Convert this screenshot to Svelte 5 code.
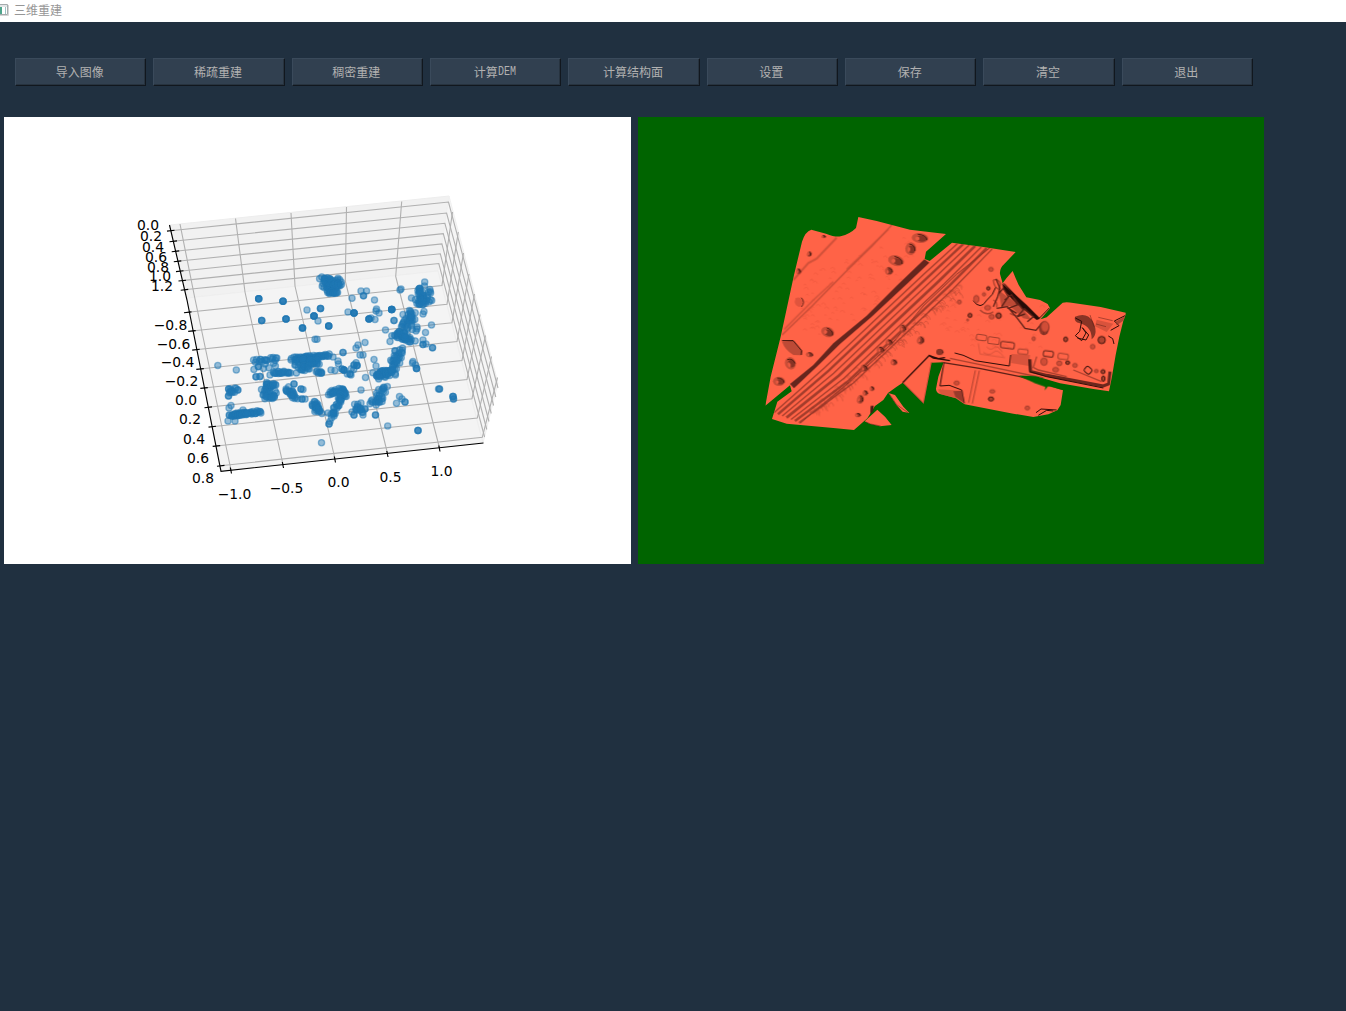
<script>
  const actions = ['导入图像', '稀疏重建', '稠密重建', '计算DEM', '计算结构面', '设置', '保存', '清空', '退出'];
  const split = (t) => t.match(/[A-Z]+|[^A-Z]+/g);

  // grid lines: x lines run down the back wall and then over the floor
  const xLines = [
    '180,224 194.5,296.5 231,470', '235.5,218.5 245,292 283,464.5', '291,213 295,286 335,459',
    '346.5,207 345.3,281 387.5,453.5', '401.7,201.5 395.7,276.5 439.5,448'
  ];
  const zLeft = [[170.5, 230.7], [173, 241.3], [175.2, 251.3], [177.3, 261.3], [179.5, 271.2], [182, 280.6], [184.2, 289.8]];
  const zRight = [[448.5, 202], [446.6, 213], [444.9, 223.3], [443.3, 233.7], [441.9, 243.9], [440.3, 253.8], [438.8, 263.5]];
  const zEnd = [[498, 388], [495.8, 397], [493.6, 405.5], [491.3, 413.5], [489, 421.5], [486.8, 429.5], [484.6, 437]];
  const yLeft = [[187.5, 312.3], [191.7, 331], [195.7, 349.7], [199.8, 369], [203.8, 388], [208, 407.3], [212, 426.7], [216.2, 446], [220.5, 465.8]];
  const yRight = [[442, 285.5], [447, 304.3], [452, 322.7], [457, 341.5], [462, 360.5], [467, 379.5], [472, 398.7], [477.3, 418], [482.3, 437.3]];
  const yTop = [[452.5, 212], [458.3, 232], [463.5, 253], [469, 274], [474.5, 294], [480, 314.5], [485.5, 335.5], [491.5, 356.5], [497.5, 377.5]];
  const xTicks = [[231, 470], [283, 464.5], [335, 459], [387.5, 453.5], [439.5, 448]];

  const labels = [
    ['0.0', 148, 225.5], ['0.2', 151, 236.5], ['0.4', 153, 247.5], ['0.6', 156, 257.5], ['0.8', 158, 267.5],
    ['1.0', 160, 276.5], ['1.2', 162, 286.5],
    ['−0.8', 170.5, 325.5], ['−0.6', 173.5, 344.5], ['−0.4', 177.5, 362.5], ['−0.2', 181.5, 381.5], ['0.0', 186, 400.5],
    ['0.2', 190, 419.5], ['0.4', 194, 439.5], ['0.6', 198, 458.5], ['0.8', 203, 478.5],
    ['−1.0', 234.5, 494.5], ['−0.5', 286.5, 488.5], ['0.0', 338.5, 482.5], ['0.5', 390.5, 477.5], ['1.0', 441.5, 471.5]
  ];

  // scattered points: x, y, number of stacked markers
  const points = [
    258.7, 298.7, 4, 283, 301.3, 4, 261.7, 320.5, 3, 286, 319, 4, 302.5, 328, 4, 314, 316, 5, 320.5, 308.5, 3, 328.7, 326, 4,
    354, 313, 5, 391.7, 309.5, 6, 418, 430.5, 3, 439.5, 389, 2, 438.5, 389, 1, 453.5, 399, 2, 453, 396.5, 3,
    307, 310, 1, 318, 321, 1, 315, 339.3, 1, 317, 339.3, 1, 352, 298.3, 1, 348, 312, 1, 361, 291, 1, 366.5, 291, 1, 363.5, 295.8, 2,
    374.5, 300, 1, 400, 290, 1, 401, 289, 1, 424.7, 282, 1, 424.5, 286, 1, 385.5, 330, 1, 390, 341.5, 1, 403, 314.5, 1,
    394, 320.5, 2, 431.5, 325, 1, 425.5, 332.5, 1, 432.5, 347.8, 2, 423, 340, 1, 423, 344.5, 2, 426, 344, 1, 365, 342.5, 1, 358, 345, 1,
    356, 348, 1, 343, 352.5, 2, 360, 355, 1, 363, 355, 1, 333, 357, 1, 374, 359.5, 1, 376, 366, 1, 365.5, 377.5, 1, 361, 390, 1,
    413, 361.5, 1, 412.5, 363, 1, 416.5, 368.5, 3, 415.5, 365, 1, 217.8, 365.5, 1, 236.3, 370, 1, 321.5, 442.7, 1,
    387.7, 426, 1, 396.5, 403.3, 1, 405, 402, 2, 402, 399, 1, 399.5, 396.5, 1, 376, 311, 1, 376.5, 309, 1, 379, 313, 1, 375, 319.5, 1,
    369, 319, 4, 371, 318, 1, 338.5, 364, 1, 350, 374, 2, 351, 375, 1, 357, 365.5, 3, 354, 365, 2, 338, 361, 1,
    335, 370.5, 1, 331, 370, 1, 344, 370, 4, 342, 369, 2, 228, 421, 1, 235, 421, 1, 229, 408, 1, 231, 405.5, 1, 243, 410, 1,
    329, 424, 2, 330, 421.5, 1, 354, 415, 2, 352, 412, 1, 363, 415, 1, 375.5, 415, 2, 361, 403, 1, 365, 409, 2, 328, 413, 1,
    256, 376.8, 2, 260, 376.5, 2, 270, 375, 1, 228.5, 396, 2, 294, 384, 2, 301, 389, 2, 303, 389.5, 1,
    302, 399, 2, 305, 399, 1, 423, 314, 1, 424, 311.5, 1, 417, 329, 1, 416, 331, 1, 417, 327, 1, 411.5, 298, 1
  ];
  // dense groups: x0, y0, x1, y1, spread, count
  const groups = [
    [322, 279, 339, 281, 3, 24], [323, 285, 339, 286, 4, 34], [328, 292, 337, 293, 2.5, 18],
    [254, 361, 277, 358.5, 2, 17], [254, 367, 275, 365, 3, 8], [273, 373, 290, 372, 1.6, 20],
    [292, 359, 329, 355, 1.8, 46], [297, 363, 319, 361, 4, 34], [298, 371, 310, 366, 4, 18], [317, 372, 322, 373, 1.5, 8],
    [264, 386, 275, 385, 4, 22], [264, 392, 274, 394, 5, 20], [264, 398, 275, 398, 2, 8],
    [286, 389, 295, 398, 3.3, 22], [228, 389, 236, 391, 4, 14], [230, 415, 261, 412, 2, 40], [232, 416, 247, 413.5, 1.5, 16],
    [314, 404, 319, 411, 4, 28], [330, 393, 336, 391, 2.5, 14], [341, 388, 344, 395, 3.5, 18], [342, 395, 333, 417, 3.2, 28],
    [356, 406, 363, 411, 4, 14], [372, 403, 382, 400, 3.5, 16], [379, 398, 385, 386, 4.5, 15],
    [377, 377, 391, 371, 4, 32], [382, 373, 390, 371, 3, 16], [392, 374, 397, 354, 4.5, 24], [394, 364, 401, 349, 5, 16],
    [394, 336, 413, 341, 3.5, 20], [398, 333, 408, 336, 4, 22], [403, 328, 412, 311, 3.5, 22], [409, 328, 414, 314, 3.5, 12],
    [418, 289, 424, 298, 4, 19], [417, 302, 427, 303, 5, 20], [427, 290, 430, 302, 4, 9], [356, 365, 348, 373, 3, 4], [374, 374, 377, 377, 3, 3]
  ];
  let seed = 11;
  const rand = () => ((seed = (seed * 16807) % 2147483647) / 2147483647);
  const dots = [];
  for (let i = 0; i < points.length; i += 3)
    for (let k = 0; k < points[i + 2]; k++) dots.push([points[i], points[i + 1]]);
  for (const [x0, y0, x1, y1, s, n] of groups)
    for (let k = 0; k < n; k++) {
      const t = n > 1 ? k / (n - 1) : 0;
      dots.push([+(x0 + (x1 - x0) * t + (rand() - 0.5) * s * 1.6).toFixed(1), +(y0 + (y1 - y0) * t + (rand() - 0.5) * s * 1.6).toFixed(1)]);
    }

  // faint rough marks along the gravel edge: x, y, size
  const rubble = [];
  for (let i = 0; i < 120; i++) {
    const t = rand();
    rubble.push([190 + 430 * t + (rand() - 0.5) * 26, 640 - 372 * t + (rand() - 0.5) * 30, 5 + rand() * 10]);
  }
  // barely visible surface texture
  const stains = [];
  for (let i = 0; i < 110; i++) {
    const t = rand();
    stains.push([150 + t * 330, 330 - t * 130 + (rand() - 0.5) * 200, 3 + rand() * 7]);
  }
  for (let i = 0; i < 60; i++) stains.push([570 + rand() * 300, 300 + rand() * 150, 4 + rand() * 8]);
  // craters: x, y, rx, ry, rotation
  const pits = [
    [178, 162, 7, 9, 20], [146, 214, 7, 10, 0], [221, 110, 7, 5, 0], [510, 114, 25, 15, 5], [482, 146, 16, 19, 5], [438, 182, 24, 16, 15],
    [417, 213, 12, 13, 0], [233, 396, 20, 15, 20], [179, 464, 11, 8, 5], [121, 490, 16, 19, -20], [87, 544, 18, 14, 0],
    [432, 487, 10, 10, 0], [512, 421, 11, 13, 20], [343, 505, 11, 12, 0], [331, 598, 10, 14, 15], [346, 579, 8, 9, 0], [366, 566, 7, 8, 0],
    [324, 645, 9, 7, 0], [570, 456, 11, 10, 0], [459, 386, 10, 13, 0], [418, 427, 11, 10, 0], [392, 450, 12, 11, 0]
  ];
  const rings = [
    [88, 306, 6, 6], [120, 346, 6, 6], [113, 360, 3, 3], [162, 283, 5, 5], [175, 265, 5, 5], [173, 323, 9, 7], [139, 297, 8, 11],
    [206, 347, 8, 8], [185, 350, 8, 7], [183, 208, 7, 6], [407, 418, 6, 7], [311, 416, 5, 6], [488, 440, 7, 7], [515, 420, 11, 11],
    [342, 485, 10, 11], [388, 490, 8, 7], [413, 488, 6, 5], [435, 496, 7, 6], [499, 513, 6, 5], [519, 515, 6, 6], [80, 549, 8, 6],
    [187, 574, 8, 5], [183, 597, 8, 6], [292, 624, 7, 6], [345, 380, 12, 16], [520, 536, 5, 8], [377, 509, 9, 7]
  ];
  // rail lines: offset, width
  const tracks = [[0, 4], [14, 7], [29, 4], [44, 8], [60, 4], [74, 7], [88, 4]];
</script>

<div class="window">
  <header class="titlebar">
    <svg class="app-icon" width="9" height="14" viewBox="0 0 9 14">
      <path d="M-4 1.5H7.5V11.5H-4" fill="#fff" stroke="#a5abad" />
      <path d="M-4 3H7" stroke="#c5cacc" />
      <path d="M0 4h2v7H0z" fill="#4ea58c" />
      <path d="M5.5 4v7" stroke="#9cc5c4" />
      <path d="M-4 12.5H8.5V2" fill="none" stroke="#d5d5d5" />
    </svg>
    <span>三维重建</span>
  </header>

  <nav class="toolbar">
    {#each actions as label}
      <button type="button"><span class="caption">{#each split(label) as part}<span class:latin={/[A-Z]/.test(part)}>{part}</span>{/each}</span></button>
    {/each}
  </nav>

  <main class="views">
    <section class="view plot">
      <svg width="627" height="447" viewBox="4 117 627 447">
        <polygon class="wall" points="170,225 449,196 438,271 187,298" />
        <polygon class="side" points="449,196 498,383 483,443 438,271" />
        <polygon class="floor" points="187,298 438,271 483,443 221,471" />
        <g class="grid">
          {#each xLines as line}<polyline points={line} />{/each}
          {#each zLeft as p, i}<polyline points="{p} {zRight[i]} {zEnd[i]}" />{/each}
          {#each yLeft as p, i}<polyline points="{p} {yRight[i]} {yTop[i]}" />{/each}
        </g>
        <g class="axis">
          <polyline points="169.5,225 187,300 221,471.3 483.5,443" />
          {#each [...zLeft, ...yLeft] as [x, y]}<path d="M{x - 3.5} {y + 0.4}l7.5 -.8" />{/each}
          {#each xTicks as [x, y]}<path d="M{x - 0.7} {y - 2.5}l1.2 6" />{/each}
        </g>
        <g class="dots">
          {#each dots as [x, y]}<circle cx={x} cy={y} r="3.1" />{/each}
        </g>
        <g class="labels">
          {#each labels as [t, x, y]}<text {x} y={y + 4.5}>{t}</text>{/each}
        </g>
      </svg>
    </section>

    <section class="view mesh">
      <svg width="626" height="447" viewBox="638 117 626 447">
        <defs>
          <clipPath id="ground">
            <path d="M46 617L62 530L92 410L132 225L156 125Q165 95 184 89L228 101Q255 112 272 109Q300 102 318 84L325 51L380 63L480 89L588 102L528 155L524 177L539 183L606 128L700 141L797 156L765 190Q748 205 750 222L758 250L769 235L788 213L797 235L806 255L829 292L870 300L893 312L900 325L872 358L890 352L938 308Q950 305 970 309L1052 321L1127 338Q1128 345 1120 362L1108 410L1097 465L1085 535L1077 574L1030 567L930 550L858 529L808 527L850 544L939 571L932 615L922 631L895 643L850 651L790 641L644 613L618 595L570 582Q558 578 558 566L565 530L581 487L545 488L521 611L458 548L440 560L414 579L400 600L375 618L352 655L312 690L250 684L110 671L66 657L82 605L125 574L120 556Z" />
          </clipPath>
        </defs>
        <g transform="translate(750 200) scale(.333333)">
          <path class="land" d="M415 579L435 585L460 620L478 639L458 635L440 616Z M344 664L382 629L405 650L425 675L390 679L358 671Z" />
          <path class="rough thin faint" d="M417 580L440 614L474 638M348 666L362 672L392 678" />
          <g clip-path="url(#ground)">
            <rect class="land" width="1150" height="720" />
            <g class="soft">
              <path d="M96 405L185 319L285 217L368 136L430 70" stroke-width="4" />
              <path d="M103 388L190 300L250 245M290 208L415 88" stroke-width="5" opacity=".7" />
              <path d="M130 240L175 189L200 176L260 113" stroke-width="6" opacity=".8" />
              {#each rubble as [x, y, s]}<path d="M{x} {y}q{s / 2} {-s} {s} {-s / 2}t{s / 2} {s}" stroke-width="2.5" opacity=".75" />{/each}
            </g>
            <g class="stain">
              {#each stains as [x, y, s]}<path d="M{x} {y}q{s} {-s} {s * 1.4} {s * 0.3}" />{/each}
            </g>
            <path d="M120 552L190 495L250 430L350 347L440 257L523 178L538 188L460 262L365 350L270 432L205 496L132 565Z" fill="#65251d" />
            <g class="tracks">
              {#each tracks as [d, w]}
                <path d="M{72 + d * 0.85} {638 + d * 0.34}L{222 + d} {505 + d * 0.5}L{372 + d} {363 + d * 0.5}L{522 + d} {222 + d * 0.5}L{625 + d * 1.15} {128 + d * 0.22}" stroke-width={w} />
              {/each}
              <path d="M150 670L300 545L430 427L520 318L620 223L720 143" stroke="#6b271d" stroke-width="3" />
              <path d="M180 640C220 622 240 590 285 565" stroke-width="9" opacity=".6" />
            </g>
            {#each pits as [x, y, rx, ry, a]}
              <g transform="translate({x} {y}) rotate({a})">
                <ellipse {rx} {ry} fill="#b54733" opacity=".75" />
                <ellipse cx={rx * 0.2} cy={ry * 0.1} rx={rx * 0.65} ry={ry * 0.6} fill="#7c2f23" opacity=".85" />
                <ellipse cx={-rx * 0.3} cy={ry * 0.15} rx={rx * 0.25} ry={ry * 0.4} fill="#ea5a41" />
                <path d="M{-rx * 0.3} {-ry * 0.7}Q{rx * 0.8} {-ry * 0.7} {rx * 0.85} {ry * 0.3}" fill="none" stroke="#3b130c" stroke-width="2.5" />
              </g>
            {/each}
            <path d="M96 425L130 422L156 453L153 466L130 465Q105 450 96 425Z" fill="#bd4a36" />
            <path d="M96 422L130 422L155 452L154 465" class="ink thin" />
            <path d="M137 294Q152 288 158 304Q158 316 148 321Q136 318 134 306Z" fill="#e0543d" />
            <path d="M154 293Q167 307 154 321" class="rough thin" />
            <path d="M458 548L538 466L550 474L600 482" class="ink" />
            <path d="M545 487L521 611L458 548" class="rough faint" />
            <g transform="translate(540 0)">
              <path d="M205 270L232 290L265 310L305 360L280 355L240 318L215 323Z" fill="#923a2b" opacity=".6" />
              <path d="M217 250L250 280L290 315L330 356L320 360L280 328L245 296L220 268Z" fill="#250b07" />
              <path d="M222 250L253 282L328 355L358 324" class="ink thin" />
              <path d="M198 236L210 265L203 290L190 320M205 282L220 265L235 290L215 320M224 300L245 284L262 315L235 325L260 340M252 294L280 330L262 350L285 342M282 325L310 350L292 365M200 325L232 320L262 355L285 385L318 391L335 370" class="rough" />
              <path d="M190 240Q205 235 212 252L206 268Q192 262 190 240M150 330Q170 350 190 335M190 300q14 8 10 22M240 340q15 10 30 5" class="rough faint" />
              <path d="M197 262Q190 285 171 300Q160 317 151 317Q138 316 130 302" class="ink thin" />
              <ellipse cx="342" cy="385" rx="15" ry="21" fill="#7c2f23" opacity=".85" />
              <path d="M334 370q14 8 6 34M350 368q8 14 0 32" class="rough thin faint" />
              <path d="M435 350Q470 335 488 363Q507 400 485 418Q486 380 450 370Q430 365 435 350Z" fill="#742b20" opacity=".85" />
              <path d="M436 354L455 364L449 394L436 407L455 422L468 399L457 383L476 405L468 420L442 414" class="ink thin" />
              <path d="M500 359L550 371L530 396L495 379Z" fill="#bf4a35" opacity=".6" />
              <path d="M505 352L548 362M498 372L528 380M480 345L492 380" class="rough thin faint" />
              <path d="M585 347L553 363L567 377L542 391M535 408L548 416L552 432" class="ink thin" />
              <path d="M556 365L586 348L580 362L560 376Z" fill="#923a2b" opacity=".7" />
              <path d="M74 459L100 466L135 482L238 498L242 465" class="ink thin" />
              <path d="M60 475L150 494L340 534" class="rough faint" />
              <path d="M244 462L300 465L297 498L243 489Z" fill="#b94733" opacity=".55" />
              <path d="M300 478L302 514L350 526L520 558L536 552L540 515" fill="none" stroke="#6b271d" stroke-width="9" />
              <path d="M297 478L299 515L350 530L520 564" class="ink thin" />
              <path d="M320 470L310 502L325 510L410 530M430 510L515 545" class="rough faint" />
              <path d="M0 468L25 476L45 473" class="ink" />
              <path d="M35 487L148 505L270 530L398 565" class="rough" />
              <ellipse cx="28" cy="456" rx="9" ry="9" fill="#8d3426" />
              <path d="M42 487L30 558L58 556L95 570L103 610" class="ink thin" />
              <path d="M24 568L94 572L102 611L65 598L32 584Z" fill="#c64e39" opacity=".65" />
              <path d="M70 574L98 572L103 610L76 590Z" fill="#7c2f23" opacity=".7" />
              <path d="M136 511L116 608M148 512L127 611" class="rough thin faint" />
              <path d="M318 638L333 627L380 630M325 646L350 631L370 633" class="ink thin" />
              <g class="boxes">
                <rect x="139" y="404" width="31" height="17" rx="5" transform="rotate(7 154 412)" />
                <rect x="174" y="412" width="34" height="20" rx="4" transform="rotate(7 190 422)" />
                <rect x="212" y="426" width="41" height="19" rx="5" transform="rotate(7 232 435)" stroke="#6b271d" />
                <rect x="264" y="448" width="30" height="14" rx="4" transform="rotate(6 278 455)" />
                <rect x="340" y="453" width="30" height="17" rx="5" transform="rotate(7 355 462)" stroke="#5d2118" />
                <rect x="384" y="461" width="31" height="17" rx="6" transform="rotate(7 400 469)" />
                <rect x="464" y="501" width="21" height="19" rx="6" transform="rotate(40 474 510)" stroke="#401710" />
                <path d="M145 430L150 462L225 473M170 441q12 12 22 2t25 13M160 457q18 12 30 0t30 12" opacity=".4" />
              </g>
              {#each rings as [x, y, rx, ry], i}<ellipse cx={x} cy={y} {rx} {ry} class="ring" class:dark={i % 3 === 1} />{/each}
            </g>
          </g>
          <path d="M805 527L850 530L935 556L937 569L890 556L850 547Z" fill="#006400" />
          <path d="M848 547L884 548L903 558L893 560L884 571L886 561Z" fill="#006400" />
          <path d="M362 618L371 617L369 635L361 641Z" fill="#431912" />
        </g>
      </svg>
    </section>
  </main>
</div>

<style>
  :global(body) { margin: 0; }
  .window {
    width: 1346px; height: 1011px; overflow: hidden; background: #203040;
    font-family: "Noto Sans CJK SC", sans-serif; font-size: 12px;
  }
  .titlebar { display: flex; align-items: center; height: 22px; gap: 5px; background: #fff; color: #969696; line-height: 20px; }
  .titlebar span { height: 22px; }
  .app-icon { display: block; margin-bottom: 2px; }
  .toolbar {
    display: grid; grid-template-columns: repeat(9, 1fr); gap: 7px;
    width: 1238px; height: 28px; padding: 36px 0 31px 15px;
  }
  button {
    display: flex; justify-content: center; align-items: center; padding: 0 2px 0 0; min-width: 0; height: 28px;
    border: 1px solid; border-color: #3a4a5b #11171e #11171e #3a4a5b;
    box-shadow: inset -1px -1px #27333f; background: #314050; color: #b1b1b1;
    font: 12px/26px "Noto Sans CJK SC", sans-serif;
  }
  .caption { display: flex; height: 26px; white-space: nowrap; }
  .latin { width: 18px; font-family: "Liberation Mono", monospace; font-size: 12.5px; transform: scaleX(.8); transform-origin: 0 50%; }
  .views { display: flex; gap: 7px; padding-left: 4px; }
  .view { height: 447px; }
  .view svg { display: block; }
  .plot { width: 627px; background: #fff; }
  .mesh { width: 626px; background: #006400; }
  .wall { fill: #f1f1f1; stroke: #ededed; }
  .side { fill: #f5f5f5; stroke: #f0f0f0; }
  .floor { fill: #f4f4f4; stroke: #eee; }
  .grid { fill: none; stroke: #b0b0b0; stroke-width: 1.1; }
  .axis { fill: none; stroke: #000; stroke-width: 1.15; }
  .dots { fill: #1f77b4; stroke: #1f77b4; stroke-width: 1.3; fill-opacity: .46; stroke-opacity: .5; }
  .labels { font: 13.89px "DejaVu Sans", sans-serif; text-anchor: middle; fill: #000; }
  .land { fill: #ff6347; }
  .soft { fill: none; stroke: #9e3d2c; opacity: .6; }
  .stain { fill: none; stroke: #d95039; stroke-width: 2; opacity: .45; }
  .tracks { fill: none; stroke: #8d3426; opacity: .8; }
  .ink { fill: none; stroke: #2c0d08; stroke-width: 4; }
  .rough { fill: none; stroke: #5d2118; stroke-width: 4; }
  .thin { stroke-width: 3; }
  .faint { opacity: .5; }
  .boxes { fill: none; stroke: #a3402e; stroke-width: 3; }
  .ring { fill: #d04d37; stroke: #97392a; stroke-width: 2.5; }
  .ring.dark { fill: #ad432f; stroke: #3b130c; stroke-width: 3; }
</style>
